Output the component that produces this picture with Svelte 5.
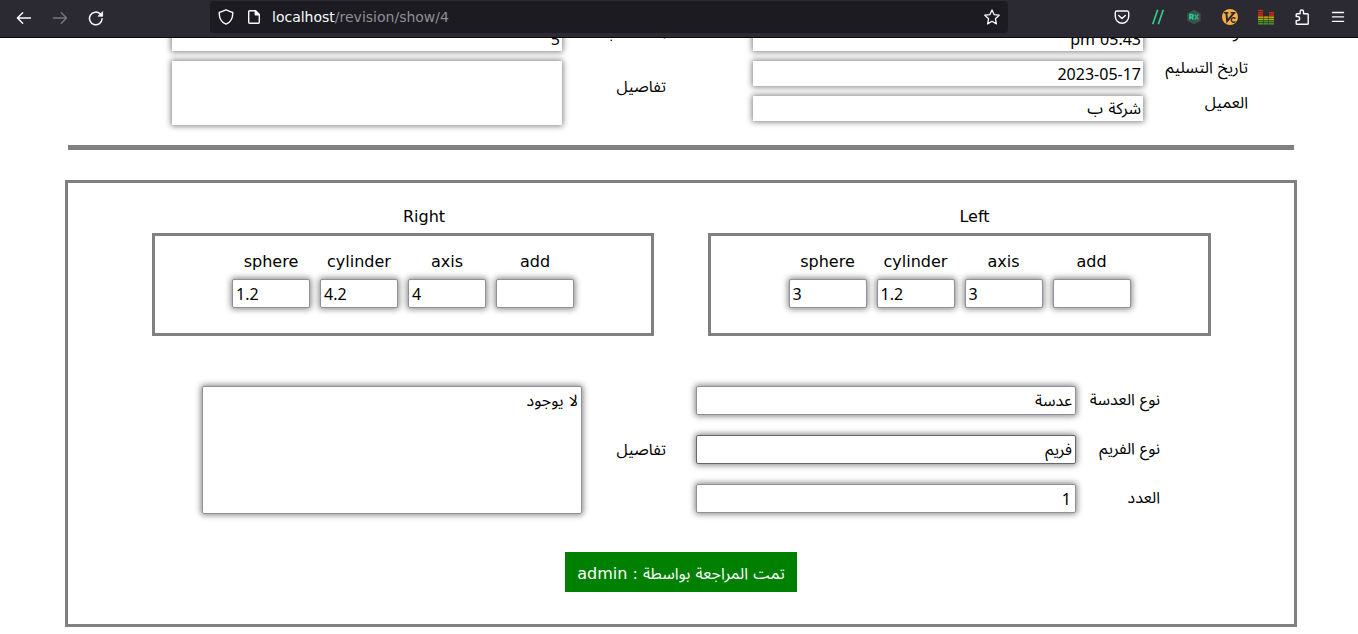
<script>
  const eyes = [
    { title: 'Right', shift: 42, values: ['1.2', '4.2', '4', ''] },
    { title: 'Left', shift: 30, values: ['3', '1.2', '3', ''] },
  ];
  const columns = ['sphere', 'cylinder', 'axis', 'add'];
  const rows = [
    { label: 'نوع العدسة', value: 'عدسة' },
    { label: 'نوع الفريم', value: 'فريم', hover: true },
    { label: 'العدد', value: '1', number: true },
  ];
  const bars = [7, 4, 6];
</script>

<div class="window">
  <header class="toolbar">
    <nav class="history">
      <svg width="16" height="16" viewBox="0 0 16 16" fill="none" stroke="#fbfbfe" stroke-width="1.4" stroke-linecap="round" stroke-linejoin="round"><path d="M14.5 8H1.5M6.7 2.7L1.4 8l5.3 5.3" /></svg>
      <svg width="16" height="16" viewBox="0 0 16 16" fill="none" stroke="#77767d" stroke-width="1.4" stroke-linecap="round" stroke-linejoin="round"><path d="M1.5 8h13M9.3 2.7L14.6 8l-5.3 5.3" /></svg>
      <svg width="16" height="16" viewBox="0 0 16 16" fill="none" stroke="#fbfbfe" stroke-width="1.5" stroke-linecap="round"><path d="M14.1 8.7A6.3 6.3 0 1 1 12.3 4" /><path d="M14.6 2v4.2h-4.2z" fill="#fbfbfe" stroke-width=".8" stroke-linejoin="round" /></svg>
    </nav>
    <div class="urlbar">
      <svg width="16" height="16" viewBox="0 0 16 16" fill="none" stroke="#fbfbfe" stroke-width="1.4" stroke-linejoin="round"><path d="M8 .8l6.2 2.5c.4 0 .6.3.6.7 0 5.2-2.3 9.4-6.8 11.2C3.5 13.4 1.2 9.2 1.2 4c0-.4.2-.7.6-.7z" /></svg>
      <svg class="doc" width="16" height="16" viewBox="0 0 16 16" fill="none" stroke="#fbfbfe" stroke-width="1.4" stroke-linejoin="round"><path d="M9.5 1.7H3.700a1 1 0 0 0-1 1v10.600a1 1 0 0 0 1 1h8.600a1 1 0 0 0 1-1V5.500z" /><path d="M9.300 1.700v4h4z" fill="#fbfbfe" /></svg>
      <span class="url">localhost<i>/revision/show/4</i></span>
      <svg width="16" height="16" viewBox="0 0 16 16" fill="none" stroke="#fbfbfe" stroke-width="1.3" stroke-linejoin="round"><path d="M8 .9l2.1 4.7 5.1.6-3.8 3.5 1 5.2L8 12.3l-4.400 2.600 1-5.200L.8 6.200l5.100-.6z" /></svg>
    </div>
    <div class="tools">
      <svg width="16" height="16" viewBox="0 0 16 16" fill="none" stroke="#fbfbfe" stroke-width="1.4" stroke-linecap="round" stroke-linejoin="round"><path d="M2.800 2h10.400a1.500 1.500 0 0 1 1.500 1.500v4a6.700 6.700 0 0 1-13.400 0v-4A1.500 1.500 0 0 1 2.800 2z" /><path d="M4.700 6.400L8 9.500l3.300-3.100" /></svg>
      <svg width="16" height="16" viewBox="0 0 16 16" fill="none" stroke="#35c98a" stroke-width="1.700"><path d="M2.700 15.300L7.700.7M8.300 15.300L13.300.7" /></svg>
      <svg width="16" height="16" viewBox="0 0 16 16"><path d="M8 .8l6.700 3.600v7.400L8 15.400l-6.700-3.600V4.400z" fill="#3a5149" /><path d="M3.900 10.500v-5h1.900a1.300 1.300 0 0 1 0 2.700H4m1.600 0l1.700 2.300" fill="none" stroke="#13d8a0" stroke-width="1.500" /><path d="M8.700 5.500l3.600 5m0-5l-3.600 5" fill="none" stroke="#4a9c83" stroke-width="1.500" /></svg>
      <svg width="16" height="16" viewBox="0 0 16 16"><circle cx="8" cy="8" r="8" fill="#fbae41" /><path d="M1.800 3.800h4.600M8.600 3.800h4.800" stroke="#2b2a33" stroke-width="1.400" /><path d="M4.300 3.800l.9 8.200L12 3.800" fill="none" stroke="#2b2a33" stroke-width="2" /><path d="M13.400 9.500a2.300 2.300 0 1 0 0 3" fill="none" stroke="#2b2a33" stroke-width="1.400" /></svg>
      <svg class="eq" width="16" height="16" viewBox="0 0 16 16">
        {#each bars as n, c}
          {#each Array(n) as _, k}
            <rect x={c * 5.5} y={14 - k * 2.2} width="5" height="1.6" fill={k < 2 ? '#43911f' : k < 4 ? '#b9a30e' : '#cf2a17'} />
          {/each}
        {/each}
      </svg>
      <svg width="16" height="16" viewBox="0 0 16 16" fill="none" stroke="#fbfbfe" stroke-width="1.4" stroke-linejoin="round"><path d="M2.200 7.500V5.500a.8.8 0 0 1 .8-.8h3.100V2.700a1.700 1.700 0 0 1 3.400 0v2h3.900a.8.8 0 0 1 .8.8v8.900a.8.8 0 0 1-.8.8H3a.8.8 0 0 1-.8-.8v-2.800h1.400a2 2 0 0 0 0-4.100z" /></svg>
      <svg width="16" height="16" viewBox="0 0 16 16" stroke="#fbfbfe" stroke-width="1.4" stroke-linecap="round"><path d="M2.500 3.500h11M2.500 7.900h11M2.500 12.400h11" /></svg>
    </div>
  </header>

  <main>
    <section class="summary">
      <div class="group">
        <div class="stack">
          <div class="field">5</div>
          <div class="field tall"></div>
        </div>
        <div class="stack labels near">
          <span class="label">المحاسب</span>
          <span class="label details">تفاصيل</span>
        </div>
      </div>
      <div class="group">
        <div class="stack">
          <div class="field">pm 05:43</div>
          <div class="field">2023-05-17</div>
          <div class="field ar">شركة ب</div>
        </div>
        <div class="stack labels">
          <span class="label">موعد</span>
          <span class="label">تاريخ التسليم</span>
          <span class="label">العميل</span>
        </div>
      </div>
    </section>
    <hr />
    <section class="card">
      <div class="eyes">
        {#each eyes as eye}
          <div class="eye">
            <h2 style="padding-left: {eye.shift}px">{eye.title}</h2>
            <div class="measures">
              {#each columns as name, i}
                <label><span>{name}</span><span class="input">{eye.values[i]}</span></label>
              {/each}
            </div>
          </div>
        {/each}
      </div>
      <div class="form">
        <div class="input note ar">لا يوجود</div>
        <span class="label mid">تفاصيل</span>
        <div class="rows">
          {#each rows as row}
            <div class="row">
              <div class="input wide" class:hover={row.hover} class:ar={!row.number} class:number={row.number}>{row.value}</div>
              <span class="label">{row.label}</span>
            </div>
          {/each}
        </div>
      </div>
      <button dir="rtl"><span class="done">تمت المراجعة بواسطة</span> : admin</button>
    </section>
  </main>
</div>

<style>
  :global(body) { margin: 0; background: #fff; }
  .window { width: 1358px; height: 634px; overflow: hidden; display: flex; flex-direction: column; background: #fff; font: 16px/20px "DejaVu Sans", sans-serif; color: #000; }
  .toolbar { box-sizing: border-box; height: 38px; flex: none; display: flex; background: #2b2a33; border-bottom: 1px solid #0c0c0d; position: relative; z-index: 1; }
  svg { display: block; flex: none; }
  .eq { overflow: visible; }
  .history { display: flex; gap: 20px; padding: 10px 0 0 16px; width: 194px; }
  .urlbar { box-sizing: border-box; width: 798px; height: 32px; margin-top: 1px; padding: 0 8px; border-radius: 4px; background: #1c1b22; display: flex; align-items: center; }
  .doc { margin-left: 12px; }
  .url { flex: 1; margin-left: 10px; font-size: 14px; color: #fbfbfe; }
  .url i { font-style: normal; color: #8f8f96; }
  .tools { display: flex; gap: 20px; padding: 9px 0 0 106px; }
  .summary { display: flex; gap: 87px; padding-left: 172px; margin-top: -12px; height: 119px; }
  .group { display: flex; }
  .stack { display: flex; flex-direction: column; gap: 10px; }
  .field { box-sizing: border-box; width: 390px; height: 25px; padding: 2px 2px 0; text-align: right; box-shadow: 0 0 6px 1px gray; background: #fff; font: 16px/22px "Noto Sans", sans-serif; word-spacing: 1px; }
  .field.tall { height: 64px; }
  .labels { width: 105px; }
  .labels.near { width: 104px; }
  .label { height: 25px; line-height: 25px; text-align: right; font-family: "Noto Sans Arabic", "Noto Sans", sans-serif; white-space: nowrap; word-spacing: 1px; }
  .labels .label { position: relative; top: -5px; }
  .labels .details { top: 14px; }
  hr { margin: 0 64px 0 68px; height: 5px; border: 0; background: gray; }
  .card { box-sizing: border-box; width: 1232px; height: 447px; margin: 30px 0 0 65px; border: 3px solid gray; }
  .eyes { display: flex; gap: 54px; padding: 24px 0 0 84px; }
  .eye { width: 502px; }
  .eye + .eye { width: 503px; }
  h2 { margin: 0 0 6px; font: 16px/20px "DejaVu Sans", sans-serif; text-align: center; }
  .measures { box-sizing: border-box; height: 103px; border: 3px solid gray; display: flex; justify-content: center; gap: 10px; padding-top: 16px; }
  label { display: flex; flex-direction: column; gap: 7px; text-align: center; }
  .input { box-sizing: border-box; width: 78px; height: 29px; border: 1px solid #8f8f9d; border-radius: 2px; background: #fff; box-shadow: 0 0 6px 1px gray; padding: 2px 3px; text-align: left; font: 16px/24px "Noto Sans", sans-serif; }
  .form { display: flex; margin: 50px 0 0 134px; }
  .input.note { width: 380px; height: 128px; text-align: right; padding-top: 2px; }
  .mid { width: 84px; margin-top: 52px; }
  .rows { display: flex; flex-direction: column; gap: 20px; margin-left: 30px; }
  .row { display: flex; }
  .row .label { width: 84px; margin-top: 2px; }
  .input.wide { width: 380px; text-align: right; }
  .input.number { padding-right: 4px; }
  .input.hover { border-color: #676774; }
  .field.ar, .input.ar { font-family: "Noto Sans Arabic", "Noto Sans", sans-serif; word-spacing: 1px; }
  .done { font-family: "Noto Sans Arabic", "Noto Sans", sans-serif; word-spacing: 1px; }
  button { display: block; width: 232px; height: 40px; margin: 38px auto 0; border: 0; padding: 3px 0 0; background: green; color: #fff; font: 16px/20px "DejaVu Sans", sans-serif; }
</style>
